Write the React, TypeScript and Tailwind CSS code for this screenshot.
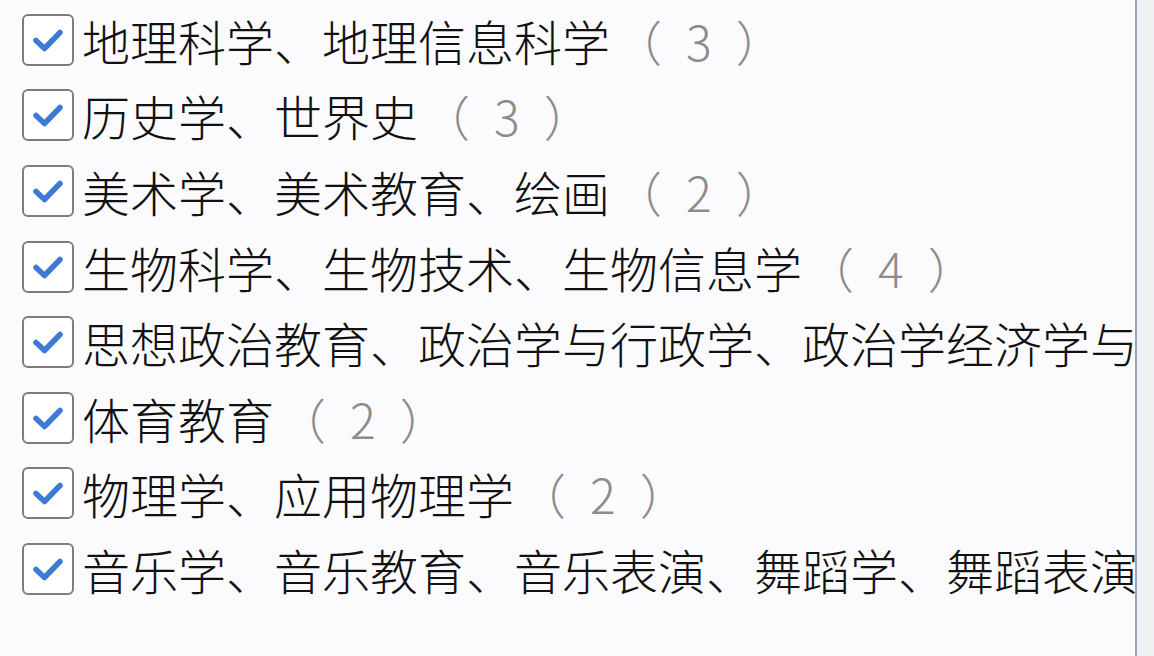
import React from 'react';

const items: { label: string; count?: number }[] = [
  { label: '地理科学、地理信息科学', count: 3 },
  { label: '历史学、世界史', count: 3 },
  { label: '美术学、美术教育、绘画', count: 2 },
  { label: '生物科学、生物技术、生物信息学', count: 4 },
  { label: '思想政治教育、政治学与行政学、政治学经济学与哲学' },
  { label: '体育教育', count: 2 },
  { label: '物理学、应用物理学', count: 2 },
  { label: '音乐学、音乐教育、音乐表演、舞蹈学、舞蹈表演' },
];

function CheckBox() {
  return (
    <div className="flex h-[52px] w-[52px] shrink-0 items-center justify-center rounded-[6px] border-2 border-[#7d7d80] bg-white">
      <svg width="34" height="34" viewBox="0 0 34 34" fill="none">
        <path
          d="M5 17.5 L13.5 25.5 L29 9.5"
          stroke="#3d7ad6"
          strokeWidth="5.5"
          strokeLinecap="round"
          strokeLinejoin="round"
        />
      </svg>
    </div>
  );
}

export default function App() {
  return (
    <div className="flex h-[656px] w-[1154px] overflow-hidden bg-[#eef0f3]">
      <div
        className="h-full w-[1137px] shrink-0 overflow-hidden border-r-2 border-[#9aa3b8] bg-[#fbfbfd] pt-[2px]"
        style={{ fontFamily: '"Noto Sans CJK SC", "Noto Sans", sans-serif' }}
      >
        {items.map((item) => (
          <div key={item.label} className="flex h-[75.6px] items-center pl-[22px]">
            <CheckBox />
            <div className="ml-[8px] whitespace-nowrap text-[48px] font-light leading-none text-[#111]">
              {item.label}
              {item.count !== undefined && (
                <span className="text-[#8c8c8c]">
                  <span className="ml-[4px]">（</span>
                  <span className="mx-[24px]">{item.count}</span>
                  <span>）</span>
                </span>
              )}
            </div>
          </div>
        ))}
      </div>
    </div>
  );
}
